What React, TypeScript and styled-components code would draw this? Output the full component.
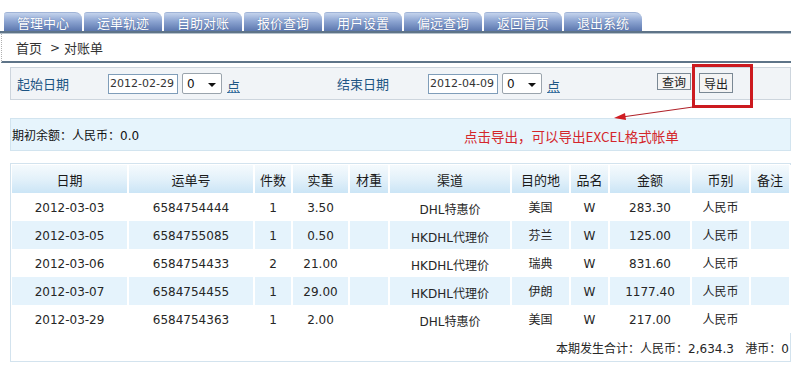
import React from "react";
import styled, { createGlobalStyle } from "styled-components";

const GlobalStyle = createGlobalStyle`
  html, body {
    margin: 0;
    padding: 0;
    background: #ffffff;
  }
  body {
    font-family: "DejaVu Sans", "Noto Sans CJK SC", sans-serif;
    font-size: 12px;
    color: #222;
  }
`;

const Page = styled.div`
  position: relative;
  width: 791px;
  height: 369px;
  overflow: hidden;
`;

const TabBar = styled.div`
  display: flex;
  gap: 2px;
  padding: 12px 0 0 4px;
  height: 19px;
`;

const Tab = styled.div`
  width: 78px;
  height: 19px;
  box-sizing: border-box;
  display: flex;
  align-items: center;
  justify-content: center;
  color: #fff;
  font-family: "Noto Sans CJK SC", sans-serif;
  font-size: 13px;
  background: linear-gradient(#c4d3ec 0%, #8da5d2 45%, #5c77ae 100%);
  border-radius: 3px 7px 0 0;
  border-top: 1px solid #9fb3d6;
  text-shadow: 0 0 1px #4a6296;
`;

const TabRule = styled.div`
  height: 2px;
  background: #5e7488;
  border-bottom: 1px solid #b6c2cc;
`;

const Crumb = styled.div`
  height: 27px;
  display: flex;
  align-items: center;
  padding-left: 14px;
  font-family: "Noto Sans CJK SC", sans-serif;
  font-size: 13px;
  color: #333;
  border-left: 1px dotted #b0b0b0;
  margin-left: 1px;
  border-bottom: 2px solid #5e7488;

  span {
    margin: 0 4px 0 8px;
    font-family: "DejaVu Sans", sans-serif;
    font-size: 12px;
  }
`;

const FilterBar = styled.div`
  margin: 4px 0 0 10px;
  height: 31px;
  border: 1px solid #cdd5dd;
  background: #f1f4f7;
  display: flex;
  align-items: center;
`;

const Label = styled.div<{ $w: number; $pl: number }>`
  width: ${(p) => p.$w}px;
  padding-left: ${(p) => p.$pl}px;
  color: #1d5584;
  font-family: "Noto Sans CJK SC", sans-serif;
  font-size: 13px;
`;

const DateInput = styled.div`
  width: 67px;
  height: 18px;
  border: 1px solid #7f9db9;
  background: #fff;
  font-family: "DejaVu Sans", sans-serif;
  font-size: 11px;
  color: #333;
  line-height: 18px;
  padding-left: 1px;
`;

const Select = styled.div`
  width: 29px;
  height: 19px;
  margin-left: 4px;
  border: 1px solid #9aa4ad;
  border-radius: 2px;
  background: #fff;
  display: flex;
  align-items: center;
  justify-content: space-between;
  padding: 0 5px 0 4px;
  font-size: 12px;
  color: #111;

  i {
    width: 0;
    height: 0;
    border-left: 4px solid transparent;
    border-right: 4px solid transparent;
    border-top: 4px solid #111;
    margin-top: 2px;
  }
`;

const Dot = styled.div`
  width: 13px;
  margin-left: 5px;
  margin-top: 4px;
  color: #1d5584;
  font-family: "Noto Sans CJK SC", sans-serif;
  font-size: 13px;
  text-decoration: underline;
  text-decoration-color: #4a80b0;
`;

const Button = styled.div<{ $ml: number; $h: number }>`
  margin-left: ${(p) => p.$ml}px;
  width: 32px;
  height: ${(p) => p.$h}px;
  border: 1px solid #7a8894;
  background: #f4f4f4;
  display: flex;
  align-items: center;
  justify-content: center;
  font-family: "Noto Sans CJK SC", sans-serif;
  font-size: 12px;
  color: #222;
  align-self: flex-start;
  margin-top: 5px;
`;

const BalanceBar = styled.div`
  margin: 18px 0 0 10px;
  height: 31px;
  border: 1px solid #d2e4ef;
  background: #e6f4fc;
  display: flex;
  align-items: center;
  font-family: "DejaVu Sans", "Noto Sans CJK SC", sans-serif;
  font-size: 12px;
  color: #111;
  padding-left: 1px;
`;

const Opening = styled.div`
  width: 452px;
`;

const Hint = styled.div`
  color: #d4262b;
  font-family: "Noto Sans CJK SC", sans-serif;
  font-size: 13.5px;
  margin-top: 2px;
`;

const TableBox = styled.div`
  margin: 12px 0 0 10px;
  height: 196px;
  border: 1px solid #d3e3ee;
  padding: 1px 0 0 1px;
`;

const Table = styled.table`
  border-collapse: collapse;
  table-layout: fixed;
  width: 779px;
  font-family: "DejaVu Sans", "Noto Sans CJK SC", sans-serif;
  font-size: 12px;
  color: #262626;

  th {
    height: 28px;
    padding: 0;
    font-weight: normal;
    font-family: "Noto Sans CJK SC", sans-serif;
    font-size: 13px;
    color: #1a1a1a;
    background: linear-gradient(#f5fafd 0%, #e3f1fa 50%, #cbe5f6 100%);
    border-right: 2px solid #fff;
    text-align: center;
  }
`;

const Row = styled.tr<{ $alt: boolean }>`
  background: ${(p) => (p.$alt ? "#e5f3fc" : "#fff")};
`;

const Cell = styled.td<{ $cjk?: boolean }>`
  height: 26px;
  padding: ${(p) => (p.$cjk ? "0 0 2px" : "2px 0 0")};
  font-family: ${(p) => (p.$cjk ? '"Noto Sans CJK SC", sans-serif' : "inherit")};
  text-align: center;
  border-right: 2px solid #fff;
  white-space: nowrap;
`;

const Total = styled.tr`
  td {
    height: 28px;
    padding: 0 1px 0 0;
    text-align: right;
    font-size: 12px;
  }
`;

const Callout = styled.div`
  position: absolute;
  left: 692px;
  top: 64px;
  width: 55px;
  height: 38px;
  border: 3px solid #cc1a1f;
`;

const Arrow = styled.svg`
  position: absolute;
  left: 600px;
  top: 100px;
`;

const tabs = ["管理中心", "运单轨迹", "自助对账", "报价查询", "用户设置", "偏远查询", "返回首页", "退出系统"];

const cols = [
  { t: "日期", w: 116 },
  { t: "运单号", w: 126 },
  { t: "件数", w: 38 },
  { t: "实重", w: 57 },
  { t: "材重", w: 40 },
  { t: "渠道", w: 122 },
  { t: "目的地", w: 59, cjk: true },
  { t: "品名", w: 39 },
  { t: "金额", w: 82 },
  { t: "币别", w: 59, cjk: true },
  { t: "备注", w: 40 },
];

const rows = [
  ["2012-03-03", "6584754444", "1", "3.50", "", "DHL特惠价", "美国", "W", "283.30", "人民币", ""],
  ["2012-03-05", "6584755085", "1", "0.50", "", "HKDHL代理价", "芬兰", "W", "125.00", "人民币", ""],
  ["2012-03-06", "6584754433", "2", "21.00", "", "HKDHL代理价", "瑞典", "W", "831.60", "人民币", ""],
  ["2012-03-07", "6584754455", "1", "29.00", "", "HKDHL代理价", "伊朗", "W", "1177.40", "人民币", ""],
  ["2012-03-29", "6584754363", "1", "2.00", "", "DHL特惠价", "美国", "W", "217.00", "人民币", ""],
];

export default function App() {
  return (
    <Page>
      <GlobalStyle />
      <TabBar>
        {tabs.map((t) => (
          <Tab key={t}>{t}</Tab>
        ))}
      </TabBar>
      <TabRule />
      <Crumb>
        首页<span>&gt;</span>对账单
      </Crumb>
      <FilterBar>
        <Label $w={91} $pl={6}>起始日期</Label>
        <DateInput>2012-02-29</DateInput>
        <Select>
          0<i />
        </Select>
        <Dot>点</Dot>
        <Label $w={91} $pl={97}>结束日期</Label>
        <DateInput>2012-04-09</DateInput>
        <Select>
          0<i />
        </Select>
        <Dot>点</Dot>
        <Button $ml={97} $h={15}>查询</Button>
        <Button $ml={8} $h={18}>导出</Button>
      </FilterBar>
      <BalanceBar>
        <Opening>期初余额：人民币：0.0</Opening>
        <Hint>点击导出，可以导出EXCEL格式帐单</Hint>
      </BalanceBar>
      <TableBox>
        <Table>
          <colgroup>
            {cols.map((c) => (
              <col key={c.t} style={{ width: c.w }} />
            ))}
          </colgroup>
          <thead>
            <tr>
              {cols.map((c) => (
                <th key={c.t}>{c.t}</th>
              ))}
            </tr>
          </thead>
          <tbody>
            {rows.map((r, i) => (
              <Row key={r[1]} $alt={i % 2 === 1}>
                {r.map((v, j) => (
                  <Cell key={j} $cjk={cols[j].cjk}>
                    {v}
                  </Cell>
                ))}
              </Row>
            ))}
            <Total>
              <td colSpan={11}>本期发生合计：人民币：2,634.3&nbsp;&nbsp;&nbsp;港币：0</td>
            </Total>
          </tbody>
        </Table>
      </TableBox>
      <Callout />
      <Arrow width="100" height="24" viewBox="0 0 100 24">
        <line x1="93" y1="7" x2="22" y2="17" stroke="#b0232a" strokeWidth="1.2" />
        <polygon points="14,18 25,13 26,20" fill="#d01c22" />
      </Arrow>
    </Page>
  );
}
